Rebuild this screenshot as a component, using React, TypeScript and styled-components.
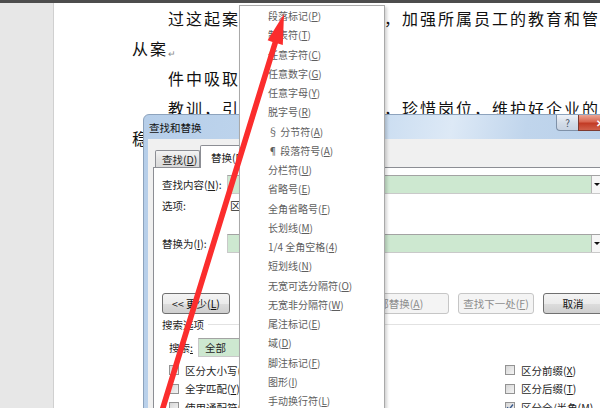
import React from 'react';
import styled, { createGlobalStyle } from 'styled-components';

const GlobalStyle = createGlobalStyle`
  html, body {
    margin: 0;
    padding: 0;
    background: #fff;
    overflow: hidden;
  }
  body {
    font-family: "Noto Sans CJK SC", "Noto Sans", sans-serif;
  }
`;

const Screen = styled.div`
  position: relative;
  width: 600px;
  height: 408px;
  overflow: hidden;
  display: flex;
  flex-direction: column;
  background: #fff;
`;

const TopStrip = styled.div`
  flex: none;
  height: 3px;
  background: #4d4d4d;
`;

const Workspace = styled.div`
  flex: 1;
  display: flex;
  min-height: 0;
`;

const Gutter = styled.div`
  flex: none;
  width: 53px;
  background: #e7e7e7;
  border-right: 1px solid #d0d0d0;
`;

const Sheet = styled.div`
  flex: 1;
  overflow: hidden;
  background: #fff;
  padding-left: 78px;
  font-family: "Noto Sans CJK SC", sans-serif;
  font-size: 16px;
  letter-spacing: 2px;
  color: #111;
`;

const DocLine = styled.div<{ $indent?: boolean }>`
  height: 30px;
  line-height: 30px;
  white-space: nowrap;
  padding-left: ${p => (p.$indent ? '36px' : '0')};
`;

const ParaMark = styled.span`
  font-size: 9px;
  color: #8a8a8a;
  letter-spacing: 0;
  vertical-align: -2px;
`;

/* ---------- dialog ---------- */

const Dialog = styled.div`
  position: absolute;
  z-index: 1;
  left: 143px;
  top: 114px;
  width: 480px;
  height: 320px;
  box-sizing: border-box;
  border: 1px solid #8da3bd;
  border-radius: 6px 6px 0 0;
  background: linear-gradient(100deg, #b6cee9 0%, #c4d9ef 40%, #dde9f6 58%, #c0d5ec 72%, #b4cce8 100%);
  display: flex;
  flex-direction: column;
  font-size: 10.5px;
  color: #1e1e1e;
`;

const TitleBar = styled.div`
  flex: none;
  height: 24px;
  display: flex;
`;

const Title = styled.div`
  flex: 1;
  align-self: center;
  padding-left: 5px;
  font-size: 10.5px;
  color: #111;
`;

const HelpButton = styled.div`
  width: 22px;
  height: 16px;
  box-sizing: border-box;
  border: 1px solid #7f91a8;
  border-top: none;
  border-right: none;
  border-radius: 0 0 0 4px;
  background: linear-gradient(#eef2f8, #d3dce8 55%, #c8d3e2);
  display: flex;
  align-items: center;
  justify-content: center;
  font-size: 10px;
  color: #4a5566;
`;

const CloseButton = styled.div`
  width: 43px;
  height: 16px;
  margin-right: 1px;
  box-sizing: border-box;
  border: 1px solid #7e3a30;
  border-top: none;
  background: linear-gradient(#eba494, #d8654f 45%, #c23b25 55%, #d0604a);
  display: flex;
  align-items: center;
  justify-content: center;
  font-size: 10px;
  font-weight: bold;
  color: #fff;
`;

const DialogBody = styled.div`
  flex: 1;
  margin: 0 4px;
  background: #f0f0f0;
  display: flex;
  flex-direction: column;
`;

const TabStrip = styled.div`
  flex: none;
  height: 28px;
  padding-left: 7px;
  display: flex;
  align-items: flex-end;
`;

const Tab = styled.div<{ $active?: boolean }>`
  position: relative;
  z-index: ${p => (p.$active ? 1 : 0)};
  box-sizing: border-box;
  width: ${p => (p.$active ? '56px' : '45px')};
  height: ${p => (p.$active ? '23px' : '17px')};
  margin-bottom: ${p => (p.$active ? '-1px' : '0')};
  padding-left: ${p => (p.$active ? '10px' : '6px')};
  border: 1px solid #8c8e94;
  border-bottom: none;
  border-radius: 2px 2px 0 0;
  background: ${p => (p.$active ? '#fff' : 'linear-gradient(#f3f3f3, #e3e3e3 50%, #d9d9d9)')};
  display: flex;
  align-items: center;
  white-space: nowrap;
`;

const Panel = styled.div`
  flex: 1;
  margin-left: 5px;
  background: #fff;
  border: 1px solid #8c8e94;
  padding: 7px 0 0 8px;
`;

const FieldRow = styled.div<{ $gap?: number }>`
  height: 19px;
  margin-top: ${p => p.$gap ?? 0}px;
  display: flex;
  align-items: center;
`;

const FieldLabel = styled.div<{ $width: number }>`
  flex: none;
  width: ${p => p.$width}px;
  white-space: nowrap;
`;

const Combo = styled.div<{ $width: number }>`
  flex: none;
  width: ${p => p.$width}px;
  height: 19px;
  box-sizing: border-box;
  border: 1px solid #c9c9c9;
  border-top-color: #a3a3a3;
  background: #cde8d0;
  display: flex;
  align-items: center;
  justify-content: space-between;
  padding-left: 6px;
`;

const ComboArrow = styled.div`
  width: 11px;
  height: 100%;
  box-sizing: border-box;
  border-left: 1px solid #b4b4b4;
  background: #f6f6f6;
  display: flex;
  align-items: center;
  justify-content: center;

  &::after {
    content: "";
    border-left: 3px solid transparent;
    border-right: 3px solid transparent;
    border-top: 3px solid #111;
  }
`;

const OptionsRow = styled.div`
  height: 16px;
  margin-top: 3px;
  display: flex;
  align-items: center;
  white-space: nowrap;
`;

const ButtonRow = styled.div`
  height: 21px;
  margin-top: 40px;
  display: flex;
`;

const ButtonGroup = styled.div`
  margin-left: 27px;
  display: flex;
  gap: 9px;
`;

const Button = styled.div<{ $width: number; $disabled?: boolean }>`
  flex: none;
  width: ${p => p.$width}px;
  height: 21px;
  box-sizing: border-box;
  border: 1px solid ${p => (p.$disabled ? '#c6c6c6' : '#707070')};
  border-radius: 3px;
  background: ${p =>
    p.$disabled ? '#f4f4f4' : 'linear-gradient(#f4f4f4, #ebebeb 50%, #dddddd 51%, #cfcfcf)'};
  color: ${p => (p.$disabled ? '#8d8d8d' : '#111')};
  display: flex;
  align-items: center;
  justify-content: center;
  white-space: nowrap;
`;

const SectionHeader = styled.div`
  height: 14px;
  margin-top: 3px;
  display: flex;
  align-items: center;
  gap: 4px;
  white-space: nowrap;

  &::after {
    content: "";
    flex: 1;
    height: 1px;
    background: #e2e2e2;
  }
`;

const SearchRow = styled.div`
  height: 19px;
  margin-top: 7px;
  padding-left: 7px;
  display: flex;
  align-items: center;
`;

const CheckGrid = styled.div`
  margin-top: 4px;
  padding-left: 7px;
  display: grid;
  grid-template-columns: 336px 1fr;
  grid-auto-rows: 18.5px;
`;

const Check = styled.div`
  display: flex;
  align-items: center;
  gap: 6px;
  white-space: nowrap;
`;

const CheckBox = styled.span`
  flex: none;
  width: 10px;
  height: 10px;
  box-sizing: border-box;
  border: 1px solid #939393;
  background: linear-gradient(135deg, #d6d6d6, #f4f4f4);
  display: flex;
  align-items: center;
  justify-content: center;
`;

/* ---------- dropdown menu ---------- */

const Menu = styled.div`
  position: absolute;
  z-index: 2;
  left: 239px;
  top: 5px;
  width: 146px;
  height: 420px;
  box-sizing: border-box;
  background: #fff;
  border: 1px solid #a9a9a9;
  box-shadow: 2px 2px 3px rgba(0, 0, 0, 0.18);
  font-size: 10px;
  color: #5e5e5e;
`;

const MenuItem = styled.div`
  height: 19.25px;
  line-height: 19.25px;
  padding-left: 28px;
  white-space: nowrap;
`;

const Arrow = styled.svg`
  position: absolute;
  z-index: 3;
  left: 0;
  top: 0;
  width: 600px;
  height: 408px;
  pointer-events: none;
`;

const menuItems: Array<[string, string]> = [
  ['段落标记(', 'P'],
  ['制表符(', 'T'],
  ['任意字符(', 'C'],
  ['任意数字(', 'G'],
  ['任意字母(', 'Y'],
  ['脱字号(', 'R'],
  ['§ 分节符(', 'A'],
  ['¶ 段落符号(', 'A'],
  ['分栏符(', 'U'],
  ['省略号(', 'E'],
  ['全角省略号(', 'F'],
  ['长划线(', 'M'],
  ['1/4 全角空格(', '4'],
  ['短划线(', 'N'],
  ['无宽可选分隔符(', 'O'],
  ['无宽非分隔符(', 'W'],
  ['尾注标记(', 'E'],
  ['域(', 'D'],
  ['脚注标记(', 'F'],
  ['图形(', 'I'],
  ['手动换行符(', 'L']
];

const checks: Array<{ text: string; key: string; checked?: boolean }> = [
  { text: '区分大小写(', key: 'H' },
  { text: '区分前缀(', key: 'X' },
  { text: '全字匹配(', key: 'Y' },
  { text: '区分后缀(', key: 'T' },
  { text: '使用通配符(', key: 'U' },
  { text: '区分全/半角(', key: 'M', checked: true }
];

const Tick = () => (
  <svg width="8" height="8" viewBox="0 0 8 8">
    <path d="M1 4.2 L3.2 6.3 L7 1.5" fill="none" stroke="#3a5a8c" strokeWidth="1.4" />
  </svg>
);

const App: React.FC = () => {
  return (
    <>
      <GlobalStyle />
      <Screen>
        <TopStrip />
        <Workspace>
          <Gutter />
          <Sheet>
            <DocLine $indent>过这起案件的警示教育作用，加强所属员工的教育和管理</DocLine>
            <DocLine>
              从案<ParaMark>↵</ParaMark>
            </DocLine>
            <DocLine $indent>件中吸取深刻教训</DocLine>
            <DocLine $indent>教训，引以为戒，爱岗敬业，珍惜岗位，维护好企业的</DocLine>
            <DocLine>稳定和发展。</DocLine>
          </Sheet>
        </Workspace>

        <Dialog>
          <TitleBar>
            <Title>查找和替换</Title>
            <HelpButton>?</HelpButton>
            <CloseButton>✕</CloseButton>
          </TitleBar>
          <DialogBody>
            <TabStrip>
              <Tab>
                查找(<u>D</u>)
              </Tab>
              <Tab $active>
                替换(<u>P</u>)
              </Tab>
            </TabStrip>
            <Panel>
              <FieldRow>
                <FieldLabel $width={65}>
                  查找内容(<u>N</u>):
                </FieldLabel>
                <Combo $width={376}>
                  <span />
                  <ComboArrow />
                </Combo>
              </FieldRow>
              <OptionsRow>
                <FieldLabel $width={68}>选项:</FieldLabel>
                <span>区分全/半角</span>
              </OptionsRow>
              <FieldRow $gap={21}>
                <FieldLabel $width={65}>
                  替换为(<u>I</u>):
                </FieldLabel>
                <Combo $width={376}>
                  <span />
                  <ComboArrow />
                </Combo>
              </FieldRow>
              <ButtonRow>
                <Button $width={68}>
                  &lt;&lt; 更少(<u>L</u>)
                </Button>
                <ButtonGroup>
                  <Button $width={76} $disabled>
                    替换(<u>R</u>)
                  </Button>
                  <Button $width={107} $disabled>
                    全部替换(<u>A</u>)
                  </Button>
                  <Button $width={76} $disabled>
                    查找下一处(<u>F</u>)
                  </Button>
                  <Button $width={60}>取消</Button>
                </ButtonGroup>
              </ButtonRow>
              <SectionHeader>搜索选项</SectionHeader>
              <SearchRow>
                <FieldLabel $width={29}>
                  搜索<u>:</u>
                </FieldLabel>
                <Combo $width={140}>
                  <span>全部</span>
                  <ComboArrow />
                </Combo>
              </SearchRow>
              <CheckGrid>
                {checks.map(c => (
                  <Check key={c.text}>
                    <CheckBox>{c.checked && <Tick />}</CheckBox>
                    <span>
                      {c.text}
                      <u>{c.key}</u>)
                    </span>
                  </Check>
                ))}
              </CheckGrid>
            </Panel>
          </DialogBody>
        </Dialog>

        <Menu>
          {menuItems.map(([label, key], i) => (
            <MenuItem key={i}>
              {label}
              <u>{key}</u>)
            </MenuItem>
          ))}
        </Menu>

        <Arrow viewBox="0 0 600 408">
          <polygon
            points="284,14 282.8,45.1 277.9,43.5 161.9,420.8 156.5,419.2 272.5,41.9 267.6,40.3"
            fill="#fb2d2d"
          />
        </Arrow>
      </Screen>
    </>
  );
};

export default App;
